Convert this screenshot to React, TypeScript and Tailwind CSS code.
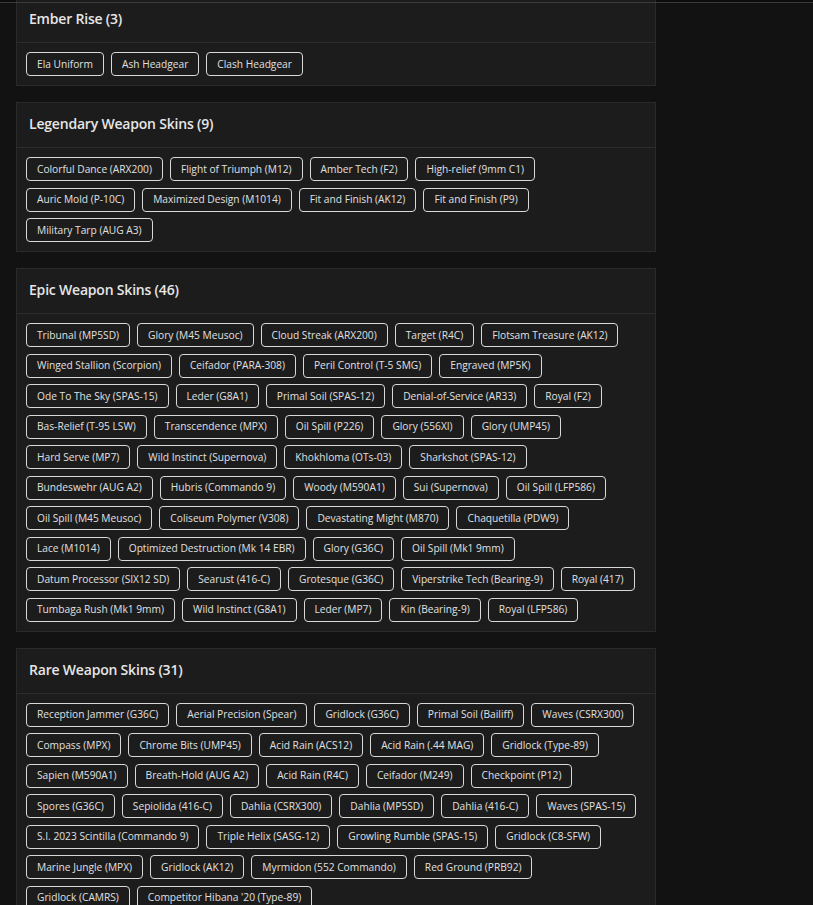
import React from "react";

type Section = { title: string; rows: string[][] };

const sections: Section[] = [
  {
    title: "Ember Rise (3)",
    rows: [["Ela Uniform", "Ash Headgear", "Clash Headgear"]],
  },
  {
    title: "Legendary Weapon Skins (9)",
    rows: [
      ["Colorful Dance (ARX200)", "Flight of Triumph (M12)", "Amber Tech (F2)", "High-relief (9mm C1)"],
      ["Auric Mold (P-10C)", "Maximized Design (M1014)", "Fit and Finish (AK12)", "Fit and Finish (P9)"],
      ["Military Tarp (AUG A3)"],
    ],
  },
  {
    title: "Epic Weapon Skins (46)",
    rows: [
      ["Tribunal (MP5SD)", "Glory (M45 Meusoc)", "Cloud Streak (ARX200)", "Target (R4C)", "Flotsam Treasure (AK12)"],
      ["Winged Stallion (Scorpion)", "Ceifador (PARA-308)", "Peril Control (T-5 SMG)", "Engraved (MP5K)"],
      ["Ode To The Sky (SPAS-15)", "Leder (G8A1)", "Primal Soil (SPAS-12)", "Denial-of-Service (AR33)", "Royal (F2)"],
      ["Bas-Relief (T-95 LSW)", "Transcendence (MPX)", "Oil Spill (P226)", "Glory (556XI)", "Glory (UMP45)"],
      ["Hard Serve (MP7)", "Wild Instinct (Supernova)", "Khokhloma (OTs-03)", "Sharkshot (SPAS-12)"],
      ["Bundeswehr (AUG A2)", "Hubris (Commando 9)", "Woody (M590A1)", "Sui (Supernova)", "Oil Spill (LFP586)"],
      ["Oil Spill (M45 Meusoc)", "Coliseum Polymer (V308)", "Devastating Might (M870)", "Chaquetilla (PDW9)"],
      ["Lace (M1014)", "Optimized Destruction (Mk 14 EBR)", "Glory (G36C)", "Oil Spill (Mk1 9mm)"],
      ["Datum Processor (SIX12 SD)", "Searust (416-C)", "Grotesque (G36C)", "Viperstrike Tech (Bearing-9)", "Royal (417)"],
      ["Tumbaga Rush (Mk1 9mm)", "Wild Instinct (G8A1)", "Leder (MP7)", "Kin (Bearing-9)", "Royal (LFP586)"],
    ],
  },
  {
    title: "Rare Weapon Skins (31)",
    rows: [
      ["Reception Jammer (G36C)", "Aerial Precision (Spear)", "Gridlock (G36C)", "Primal Soil (Bailiff)", "Waves (CSRX300)"],
      ["Compass (MPX)", "Chrome Bits (UMP45)", "Acid Rain (ACS12)", "Acid Rain (.44 MAG)", "Gridlock (Type-89)"],
      ["Sapien (M590A1)", "Breath-Hold (AUG A2)", "Acid Rain (R4C)", "Ceifador (M249)", "Checkpoint (P12)"],
      ["Spores (G36C)", "Sepiolida (416-C)", "Dahlia (CSRX300)", "Dahlia (MP5SD)", "Dahlia (416-C)", "Waves (SPAS-15)"],
      ["S.I. 2023 Scintilla (Commando 9)", "Triple Helix (SASG-12)", "Growling Rumble (SPAS-15)", "Gridlock (C8-SFW)"],
      ["Marine Jungle (MPX)", "Gridlock (AK12)", "Myrmidon (552 Commando)", "Red Ground (PRB92)"],
      ["Gridlock (CAMRS)", "Competitor Hibana '20 (Type-89)"],
    ],
  },
];

function Chip({ label }: { label: string }) {
  return (
    <span className="flex h-[24px] items-center whitespace-nowrap rounded-[4px] border border-[#d8d8d8] px-[10px] text-[10.2px] leading-none text-[#e0e0e0]">
      {label}
    </span>
  );
}

function Panel({ section }: { section: Section }) {
  return (
    <section className="w-[640px] border border-[#2a2a2a] bg-[#1c1c1c]">
      <header className="flex h-[45px] items-center border-b border-[#2c2c2c] px-3 pb-[3px]">
        <h2 className="text-[14px] font-semibold tracking-[-0.2px] text-[#e6e6e6]">{section.title}</h2>
      </header>
      <div className="flex flex-col gap-y-[6.5px] p-[9px]">
        {section.rows.map((row, i) => (
          <div key={i} className="flex gap-x-[7px]">
            {row.map((label) => (
              <Chip key={label} label={label} />
            ))}
          </div>
        ))}
      </div>
    </section>
  );
}

export default function App() {
  return (
    <div
      className="flex h-screen flex-col overflow-hidden bg-[#121212]"
      style={{ fontFamily: '"Open Sans", "Noto Sans", sans-serif' }}
    >
      <div className="h-[2px] shrink-0 bg-[#0c0c0c]" />
      <div className="relative z-10 h-px shrink-0 bg-[#3a3a3a]" />
      <main className="-mt-[6px] flex flex-col gap-4 pl-4">
        {sections.map((s) => (
          <Panel key={s.title} section={s} />
        ))}
      </main>
    </div>
  );
}
